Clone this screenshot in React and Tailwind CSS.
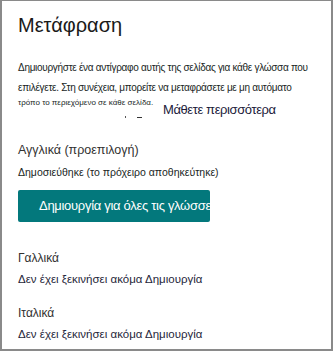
import React from "react";

const font = { fontFamily: '"Liberation Sans", "DejaVu Sans", sans-serif' };

const LanguageRow = ({ name, status, className }) => (
  <div className={className}>
    <p className="text-[12px] leading-[14px] text-[#323130]">{name}</p>
    <p className="mt-[7px] text-[11.5px] leading-[14px] text-[#1f1f3a]">{status}</p>
  </div>
);

const App = () => {
  return (
    <div
      className="w-[333px] h-[351px] bg-white border-x-2 border-b-2 border-t border-[#8a8a8a] px-[16px] overflow-hidden"
      style={font}
    >
      {/* Header */}
      <h1 className="mt-[12px] text-[20px] leading-[24px] text-[#1b1a19]">Μετάφραση</h1>

      {/* Description */}
      <p className="mt-[21px] text-[10px] tracking-[-0.3px] leading-[20px] text-[#201f1e] whitespace-nowrap">
        Δημιουργήστε ένα αντίγραφο αυτής της σελίδας για κάθε γλώσσα που
        <br />
        επιλέγετε. Στη συνέχεια, μπορείτε να μεταφράσετε με μη αυτόματο
      </p>
      <div className="flex items-start">
        <div className="w-[145px]">
          <p className="text-[8px] leading-[10px] text-[#201f1e]">τρόπο το περιεχόμενο σε κάθε σελίδα.</p>
          <div className="mt-[6px] ml-[107px] flex items-end gap-[11px] h-[4px]">
            <span className="w-[1px] h-[2px] bg-[#555]"></span>
            <span className="w-[5px] h-[1px] bg-[#333]"></span>
          </div>
        </div>
        <a className="mt-[4px] text-[13px] tracking-[-0.4px] leading-[16px] text-[#1b1a3a]">Μάθετε περισσότερα</a>
      </div>

      {/* Default language */}
      <p className="mt-[24px] text-[12.5px] leading-[16px] text-[#323130]">Αγγλικά (προεπιλογή)</p>
      <p className="mt-[7px] text-[10.5px] leading-[14px] text-[#201f1e]">
        Δημοσιεύθηκε (το πρόχειρο αποθηκεύτηκε)
      </p>

      <button className="mt-[11px] w-[192px] h-[32px] bg-[#03787c] rounded-[2px] pl-[21px] text-left text-white text-[13px] tracking-[-0.3px] whitespace-nowrap overflow-hidden">
        Δημιουργία για όλες τις γλώσσες
      </button>

      <LanguageRow className="mt-[29px]" name="Γαλλικά" status="Δεν έχει ξεκινήσει ακόμα Δημιουργία" />
      <LanguageRow className="mt-[20px]" name="Ιταλικά" status="Δεν έχει ξεκινήσει ακόμα Δημιουργία" />
    </div>
  );
};

export default App;
